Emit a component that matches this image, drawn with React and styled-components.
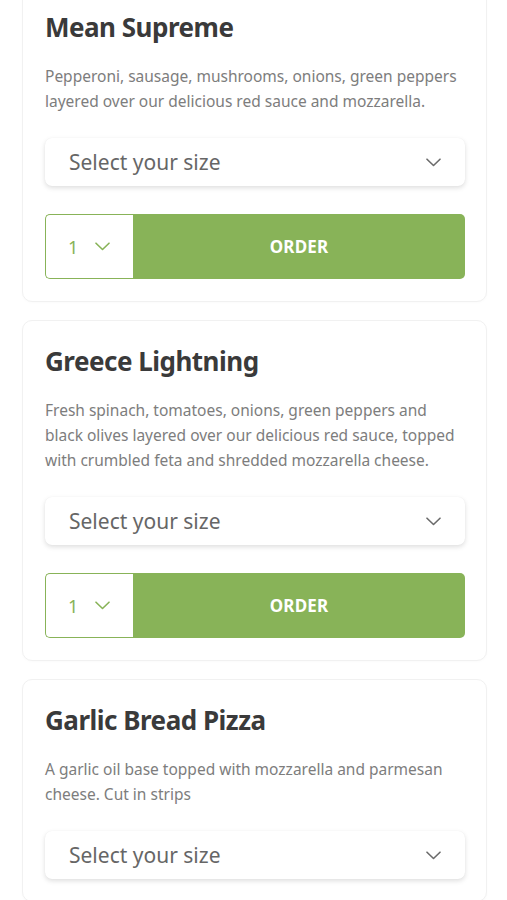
import React from 'react'
import styled, { createGlobalStyle } from 'styled-components'

const GlobalStyle = createGlobalStyle`
  body {
    margin: 0;
    background: #ffffff;
    font-family: "Noto Sans", "Open Sans", sans-serif;
  }
`

const pizzas = [
  {
    name: 'Mean Supreme',
    desc: 'Pepperoni, sausage, mushrooms, onions, green peppers layered over our delicious red sauce and mozzarella.',
    order: true,
  },
  {
    name: 'Greece Lightning',
    desc: 'Fresh spinach, tomatoes, onions, green peppers and black olives layered over our delicious red sauce, topped with crumbled feta and shredded mozzarella cheese.',
    order: true,
  },
  {
    name: 'Garlic Bread Pizza',
    desc: 'A garlic oil base topped with mozzarella and parmesan cheese. Cut in strips',
    order: false,
  },
]

function Chevron({ color }) {
  return (
    <svg width="15" height="9" viewBox="0 0 15 9" fill="none">
      <path d="M1 1.2 L7.5 7.5 L14 1.2" stroke={color} strokeWidth="1.6" strokeLinecap="round" strokeLinejoin="round" />
    </svg>
  )
}

function PizzaCard({ pizza }) {
  return (
    <Card>
      <Title>{pizza.name}</Title>
      <Desc>{pizza.desc}</Desc>
      <SizeSelect>
        <span>Select your size</span>
        <Chevron color="#6b6b6b" />
      </SizeSelect>
      {pizza.order && (
        <OrderRow>
          <Qty>
            <span>1</span>
            <Chevron color="#88b358" />
          </Qty>
          <OrderButton>ORDER</OrderButton>
        </OrderRow>
      )}
    </Card>
  )
}

export default function App() {
  return (
    <>
      <GlobalStyle />
      <List>
        {pizzas.map((p) => (
          <PizzaCard key={p.name} pizza={p} />
        ))}
      </List>
    </>
  )
}

const List = styled.div`
  display: flex;
  flex-direction: column;
  gap: 18px;
  padding: 0 20px 0 22px;
  margin-top: -14px;
`

const Card = styled.div`
  background: #fff;
  border: 1px solid #f1f1f1;
  border-radius: 10px;
  padding: 22px 21px 22px 22px;
  box-shadow: 0 1px 3px rgba(0, 0, 0, 0.02);
`

const Title = styled.h2`
  margin: 0;
  font-size: 26px;
  line-height: 36px;
  font-weight: 700;
  color: #3a3a3a;
  letter-spacing: -0.5px;
`

const Desc = styled.p`
  margin: 19px 0 0;
  font-size: 15.5px;
  line-height: 25px;
  color: #7d7d7d;
`

const SizeSelect = styled.div`
  margin-top: 24px;
  height: 48px;
  border-radius: 7px;
  background: #fff;
  box-shadow: 0 2px 5px rgba(0, 0, 0, 0.13), 0 0 1px rgba(0, 0, 0, 0.06);
  display: flex;
  align-items: center;
  justify-content: space-between;
  padding: 0 24px 0 24px;
  font-size: 21px;
  color: #666;
`

const OrderRow = styled.div`
  margin-top: 28px;
  height: 65px;
  display: flex;
`

const Qty = styled.div`
  width: 88px;
  box-sizing: border-box;
  border: 1.5px solid #88b358;
  border-right: none;
  border-radius: 5px 0 0 5px;
  display: flex;
  align-items: center;
  gap: 17px;
  padding-left: 22px;
  font-size: 18px;
  color: #88b358;
`

const OrderButton = styled.button`
  flex: 1;
  border: none;
  border-radius: 0 5px 5px 0;
  background: #88b358;
  color: #fff;
  font-family: inherit;
  font-size: 17px;
  font-weight: 700;
  letter-spacing: 0.2px;
`
